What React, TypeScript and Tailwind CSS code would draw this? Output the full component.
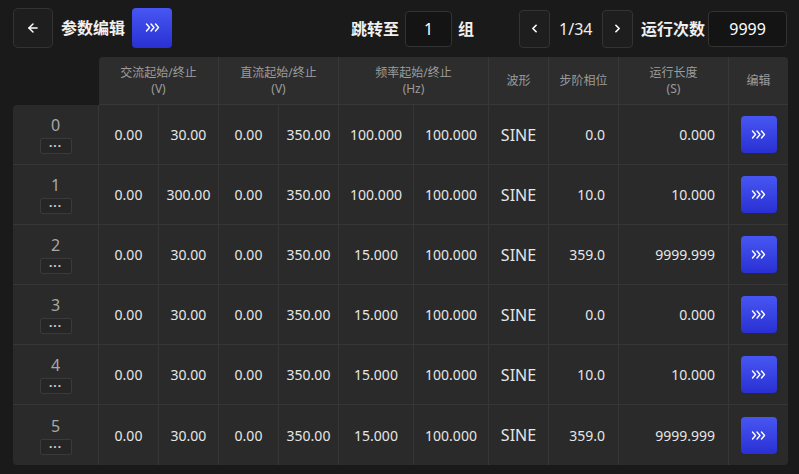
import { ArrowLeft, ChevronLeft, ChevronRight } from "lucide-react";

const rows = [
  { id: 0, v: ["0.00", "30.00", "0.00", "350.00", "100.000", "100.000"], phase: "0.0", len: "0.000" },
  { id: 1, v: ["0.00", "300.00", "0.00", "350.00", "100.000", "100.000"], phase: "10.0", len: "10.000" },
  { id: 2, v: ["0.00", "30.00", "0.00", "350.00", "15.000", "100.000"], phase: "359.0", len: "9999.999" },
  { id: 3, v: ["0.00", "30.00", "0.00", "350.00", "15.000", "100.000"], phase: "0.0", len: "0.000" },
  { id: 4, v: ["0.00", "30.00", "0.00", "350.00", "15.000", "100.000"], phase: "10.0", len: "10.000" },
  { id: 5, v: ["0.00", "30.00", "0.00", "350.00", "15.000", "100.000"], phase: "359.0", len: "9999.999" },
];

function Chevrons() {
  return (
    <svg width="15" height="9" viewBox="0 0 15 9" fill="none" stroke="white" strokeWidth="1.4" strokeLinecap="round" strokeLinejoin="round">
      <polyline points="1.5,1 4.5,4.5 1.5,8" />
      <polyline points="6,1 9,4.5 6,8" />
      <polyline points="10.5,1 13.5,4.5 10.5,8" />
    </svg>
  );
}

function BlueButton({ className = "" }: { className?: string }) {
  return (
    <div className={`flex shrink-0 items-center justify-center rounded-[4px] bg-gradient-to-b from-[#4756f2] to-[#2a2fd3] ${className}`}>
      <Chevrons />
    </div>
  );
}

const cell = "flex items-center border-b border-r border-[#363636] bg-[#2a2a2a] text-[14px] text-[#e6e6e6]";
const head = "flex flex-col items-center justify-center whitespace-nowrap border-b border-r border-[#383838] bg-[#2d2d2d] text-[12px] leading-[16px] text-[#9c9c9c]";
const label = "shrink-0 whitespace-nowrap text-[16px] font-bold text-[#f0f0f0]";
const box = "flex shrink-0 items-center justify-center rounded-[4px] border border-[#333]";

export default function App() {
  return (
    <div
      className="h-[474px] w-[799px] overflow-hidden bg-[#1a1a1a] pl-[13px] pr-[11px]"
      style={{ fontFamily: '"Noto Sans", "Noto Sans CJK SC", sans-serif' }}
    >
      <div className="flex h-[57px] items-center">
        <div className={`${box} mb-[2px] h-[40px] w-[40px] rounded-[5px] bg-[#1e1e1e]`}>
          <ArrowLeft className="h-[14px] w-[14px] text-white" strokeWidth={2.5} />
        </div>
        <span className={`${label} ml-[8px] mb-[2px] text-[#e8e8e8]`}>参数编辑</span>
        <BlueButton className="ml-[7px] mb-[2px] h-[40px] w-[40px]" />

        <span className={`${label} ml-[179px] text-[15.5px]`}>跳转至</span>
        <div className={`${box} ml-[6px] h-[36px] w-[47px] bg-[#141414] text-[16px] text-white`}>1</div>
        <span className={`${label} ml-[6px]`}>组</span>

        <div className={`${box} ml-[45px] h-[38px] w-[31px] bg-[#1e1e1e]`}>
          <ChevronLeft className="h-[13px] w-[13px] text-white" strokeWidth={3} />
        </div>
        <span className="ml-[9px] w-[35px] shrink-0 whitespace-nowrap text-[16px] text-[#f0f0f0]">1/34</span>
        <div className={`${box} ml-[8px] h-[38px] w-[31px] bg-[#1e1e1e]`}>
          <ChevronRight className="h-[13px] w-[13px] text-white" strokeWidth={3} />
        </div>
        <span className={`${label} ml-[8px] text-[15.5px]`}>运行次数</span>
        <div className={`${box} ml-[3px] h-[36px] w-[79px] bg-[#141414] text-[16px] text-white`}>9999</div>
      </div>

      <div className="grid grid-cols-[86px_60px_60px_60px_60px_75px_75px_60px_70px_110px_59px] grid-rows-[48px_repeat(6,60px)]">
        <div />
        <div className={`${head} col-span-2 rounded-tl-[4px]`}>
          <span>交流起始/终止</span>
          <span>(V)</span>
        </div>
        <div className={`${head} col-span-2`}>
          <span>直流起始/终止</span>
          <span>(V)</span>
        </div>
        <div className={`${head} col-span-2`}>
          <span>频率起始/终止</span>
          <span>(Hz)</span>
        </div>
        <div className={head}>波形</div>
        <div className={head}>步阶相位</div>
        <div className={head}>
          <span>运行长度</span>
          <span>(S)</span>
        </div>
        <div className={`${head} rounded-tr-[4px] border-r-0`}>编辑</div>

        {rows.map((r, i) => {
          const last = i === rows.length - 1;
          return [
            <div
              key={`l${r.id}`}
              className={`${cell} flex-col justify-center ${i === 0 ? "rounded-tl-[4px]" : ""} ${last ? "rounded-bl-[4px] border-b-0" : ""}`}
            >
              <span className="text-[16px] leading-[20px] text-[#a8a8a8]">{r.id}</span>
              <div className="mt-[3px] flex h-[16px] w-[32px] items-center justify-center rounded-[2px] border border-[#3a3a3a] bg-[#262626] text-[12px] font-bold leading-none tracking-[1px] text-[#cfcfcf]">
                ···
              </div>
            </div>,
            ...r.v.map((val, j) => (
              <div key={`v${r.id}-${j}`} className={`${cell} justify-center ${last ? "border-b-0" : ""}`}>
                {val}
              </div>
            )),
            <div key={`w${r.id}`} className={`${cell} justify-center text-[16px] ${last ? "border-b-0" : ""}`}>
              SINE
            </div>,
            <div key={`p${r.id}`} className={`${cell} justify-end pr-[13px] ${last ? "border-b-0" : ""}`}>
              {r.phase}
            </div>,
            <div key={`s${r.id}`} className={`${cell} justify-end pr-[13px] ${last ? "border-b-0" : ""}`}>
              {r.len}
            </div>,
            <div
              key={`e${r.id}`}
              className={`${cell} justify-center border-r-0 ${last ? "rounded-br-[4px] border-b-0" : ""}`}
            >
              <BlueButton className="h-[37px] w-[36px]" />
            </div>,
          ];
        })}
      </div>
    </div>
  );
}
